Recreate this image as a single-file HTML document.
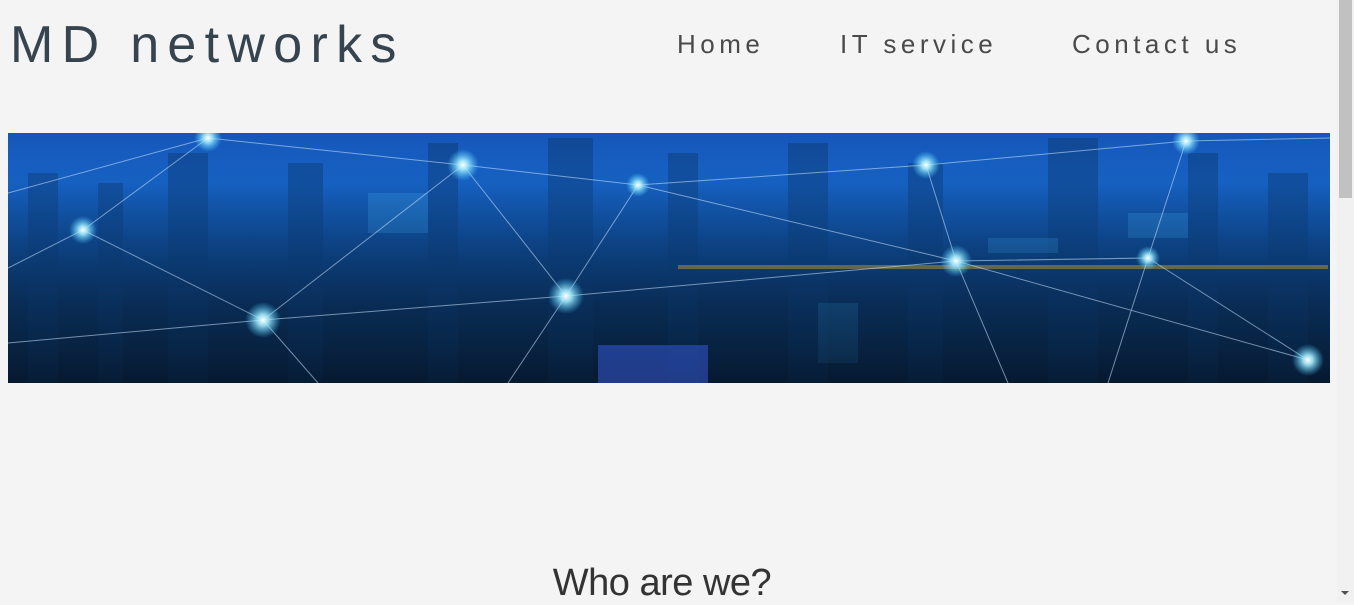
<!DOCTYPE html>
<html><head><meta charset="utf-8"><style>
html,body{margin:0;padding:0;}
body{width:1354px;height:602px;overflow:hidden;background:#f4f4f4;font-family:"Liberation Sans",sans-serif;position:relative;}
.logo{position:absolute;left:10px;top:14px;font-size:52px;letter-spacing:8.3px;color:#36444f;font-weight:normal;line-height:62px;}
.nav{position:absolute;top:29px;font-size:26px;letter-spacing:4.5px;color:#4a4a4a;line-height:30px;}
.hero{position:absolute;left:8px;top:133px;width:1322px;height:250px;overflow:hidden;
background:linear-gradient(180deg,#1556b8 0%,#1763c4 20%,#0e3f7a 48%,#0a2646 70%,#08182e 100%);}
h2{position:absolute;left:0;width:1324px;text-align:center;top:562px;margin:0;font-weight:normal;font-size:38px;color:#333;letter-spacing:-0.5px;}
.sb{position:absolute;left:1337px;top:0;width:17px;height:602px;background:#f1f1f1;}
.th{position:absolute;left:1339px;top:0;width:13px;height:198px;background:#c1c1c1;}
.ar{position:absolute;left:1341px;top:591px;width:0;height:0;border-left:4px solid transparent;border-right:4px solid transparent;border-top:4px solid #505050;}
</style></head><body>
<div class="logo">MD networks</div>
<div class="nav" style="left:677px">Home</div>
<div class="nav" style="left:840px">IT service</div>
<div class="nav" style="left:1072px">Contact us</div>
<div class="hero">
<svg width="1322" height="250" viewBox="0 0 1322 250">
<defs><radialGradient id="g"><stop offset="0" stop-color="#fff"/><stop offset=".3" stop-color="#aef" stop-opacity=".9"/><stop offset="1" stop-color="#4cf" stop-opacity="0"/></radialGradient>
<linearGradient id="c" x1="0" y1="0" x2="0" y2="1"><stop offset="0" stop-color="#1466d8" stop-opacity=".0"/><stop offset=".5" stop-color="#0a3c78" stop-opacity=".5"/><stop offset="1" stop-color="#061a30" stop-opacity=".8"/></linearGradient></defs>
<g fill="#0c3566" opacity=".45">
<rect x="20" y="40" width="30" height="210"/><rect x="90" y="50" width="25" height="200"/><rect x="160" y="20" width="40" height="230"/><rect x="280" y="30" width="35" height="220"/><rect x="420" y="10" width="30" height="240"/><rect x="540" y="5" width="45" height="245"/><rect x="660" y="20" width="30" height="230"/><rect x="780" y="10" width="40" height="240"/><rect x="900" y="30" width="35" height="220"/><rect x="1040" y="5" width="50" height="245"/><rect x="1180" y="20" width="30" height="230"/><rect x="1260" y="40" width="40" height="210"/></g>
<g fill="#3fa8e8" opacity=".35"><rect x="360" y="60" width="60" height="40"/><rect x="810" y="170" width="40" height="60"/><rect x="1120" y="80" width="60" height="25"/><rect x="980" y="105" width="70" height="15"/></g>
<rect width="1322" height="250" fill="url(#c)"/>
<rect x="670" y="132" width="650" height="4" fill="#c8902a" opacity=".5"/>
<rect x="590" y="212" width="110" height="38" fill="#3a5be0" opacity=".5"/>
<g stroke="#cfe6ff" stroke-width="1" opacity=".55" fill="none">
<path d="M0 60 L200 5 L455 32 L630 52 L918 32 L1178 8 L1322 5"/><path d="M75 97 L255 187 L558 163 L948 128 L1140 125 L1300 227"/><path d="M0 135 L75 97 L200 5"/><path d="M455 32 L558 163 L630 52"/><path d="M255 187 L455 32"/><path d="M918 32 L948 128 L1000 250"/><path d="M558 163 L500 250"/><path d="M255 187 L310 250"/><path d="M1178 8 L1140 125 L1100 250"/><path d="M948 128 L1300 227"/><path d="M0 210 L255 187"/><path d="M630 52 L948 128"/></g>
<g><circle cx="200" cy="5" r="14" fill="url(#g)"/><circle cx="455" cy="32" r="16" fill="url(#g)"/><circle cx="630" cy="52" r="12" fill="url(#g)"/><circle cx="918" cy="32" r="14" fill="url(#g)"/><circle cx="1178" cy="8" r="14" fill="url(#g)"/><circle cx="75" cy="97" r="14" fill="url(#g)"/><circle cx="255" cy="187" r="18" fill="url(#g)"/><circle cx="558" cy="163" r="18" fill="url(#g)"/><circle cx="948" cy="128" r="16" fill="url(#g)"/><circle cx="1140" cy="125" r="12" fill="url(#g)"/><circle cx="1300" cy="227" r="16" fill="url(#g)"/></g>
</svg></div>
<h2>Who are we?</h2>
<div class="sb"></div><div class="th"></div><div class="ar"></div>
</body></html>
